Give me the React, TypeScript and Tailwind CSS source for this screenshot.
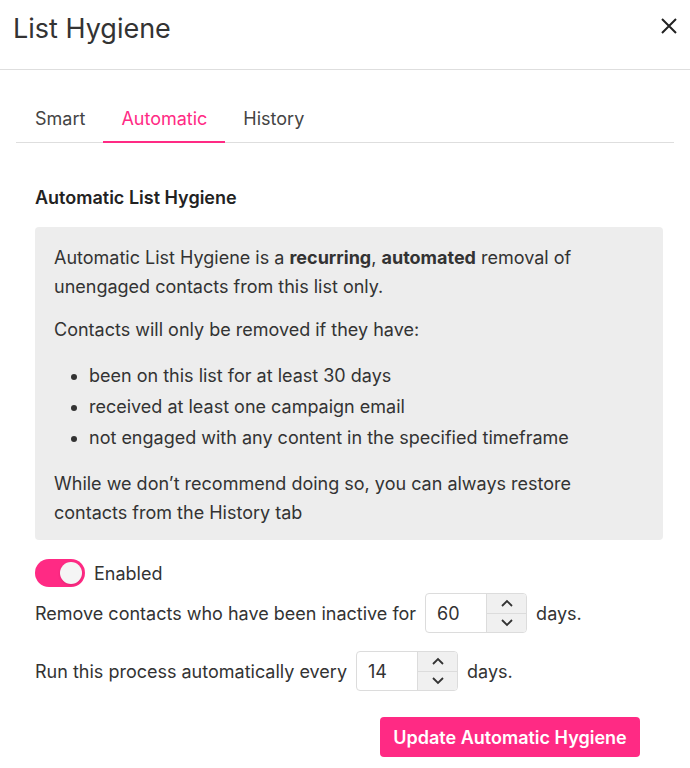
function NumberInput({ value }: { value: number }) {
    return (
        <div className="flex h-[40px] w-[102px] rounded border border-[#dcdcdc] bg-white overflow-hidden">
            <div className="flex flex-1 items-center pl-[11px] text-[18px] text-[#333]">{value}</div>
            <div className="flex w-[40px] flex-col border-l border-[#dcdcdc] bg-[#f0f0f0]">
                <div className="flex flex-1 items-center justify-center border-b border-[#dcdcdc]">
                    <svg width="14" height="9" viewBox="0 0 14 9" fill="none" stroke="#333" strokeWidth="1.8">
                        <path d="M2 7 L7 2 L12 7" />
                    </svg>
                </div>
                <div className="flex flex-1 items-center justify-center">
                    <svg width="14" height="9" viewBox="0 0 14 9" fill="none" stroke="#333" strokeWidth="1.8">
                        <path d="M2 2 L7 7 L12 2" />
                    </svg>
                </div>
            </div>
        </div>
    );
}

export default function App() {
    const tabs = ["Smart", "Automatic", "History"];
    const active = "Automatic";

    return (
        <div className="w-[690px] h-[768px] bg-white text-[#333] font-['Inter',sans-serif] overflow-hidden">
            <div className="flex h-[70px] items-center justify-between border-b border-[#dedede] pl-[13px] pr-[10px] pb-[10px]">
                <h2 className="text-[27px] font-normal text-[#333]">List Hygiene</h2>
                <button className="text-[#222] mb-[8px]">
                    <svg width="22" height="22" viewBox="0 0 22 22" stroke="#222" strokeWidth="2">
                        <path d="M4 4 L18 18 M18 4 L4 18" />
                    </svg>
                </button>
            </div>

            <div className="px-[16px] pt-[35px]">
                <div className="flex border-b border-[#dedede] pl-[1px]">
                    {tabs.map((t) => (
                        <div
                            key={t}
                            className={
                                t === active
                                    ? "px-[18px] pb-[9px] leading-[27px] text-[18px] text-[#ff2a84] border-b-2 border-[#ff2a84] -mb-px"
                                    : "px-[18px] pb-[9px] leading-[27px] text-[18px] text-[#444]"
                            }
                        >
                            {t}
                        </div>
                    ))}
                </div>

                <div className="pl-[19px] pr-[11px] pt-[41px]">
                    <h3 className="text-[18px] leading-[27px] font-semibold text-[#222] mb-[16px]">Automatic List Hygiene</h3>
                    <div className="rounded bg-[#ededed] px-[19px] pt-[16px] pb-[13px] text-[18px] leading-[29px] text-[#333]">
                        <p>
                            Automatic List Hygiene is a <b>recurring</b>, <b>automated</b> removal of
                            unengaged contacts from this list only.
                        </p>
                        <p className="mt-[14px]">Contacts will only be removed if they have:</p>
                        <ul className="mt-[17px] list-disc pl-[35px] space-y-[2px]">
                            <li>been on this list for at least 30 days</li>
                            <li>received at least one campaign email</li>
                            <li>not engaged with any content in the specified timeframe</li>
                        </ul>
                        <p className="mt-[17px]">
                            While we don’t recommend doing so, you can always restore contacts from the History tab
                        </p>
                    </div>

                    <div className="mt-[19px] flex items-center gap-[9px]">
                        <div className="flex h-[28px] w-[50px] items-center justify-end rounded-full bg-[#ff2a84] pr-[3px]">
                            <div className="h-[22px] w-[22px] rounded-full bg-[#f5f5f5] shadow" />
                        </div>
                        <span className="text-[18px]">Enabled</span>
                    </div>

                    <div className="mt-[6px] flex items-center gap-[9px] text-[18px]">
                        <span>Remove contacts who have been inactive for</span>
                        <NumberInput value={60} />
                        <span>days.</span>
                    </div>

                    <div className="mt-[18px] flex items-center gap-[9px] text-[18px]">
                        <span>Run this process automatically every</span>
                        <NumberInput value={14} />
                        <span>days.</span>
                    </div>

                    <div className="mt-[26px] flex justify-end pr-[23px]">
                        <button className="h-[40px] w-[260px] rounded bg-[#ff2a84] text-[18px] font-semibold text-white">
                            Update Automatic Hygiene
                        </button>
                    </div>
                </div>
            </div>
        </div>
    );
}
